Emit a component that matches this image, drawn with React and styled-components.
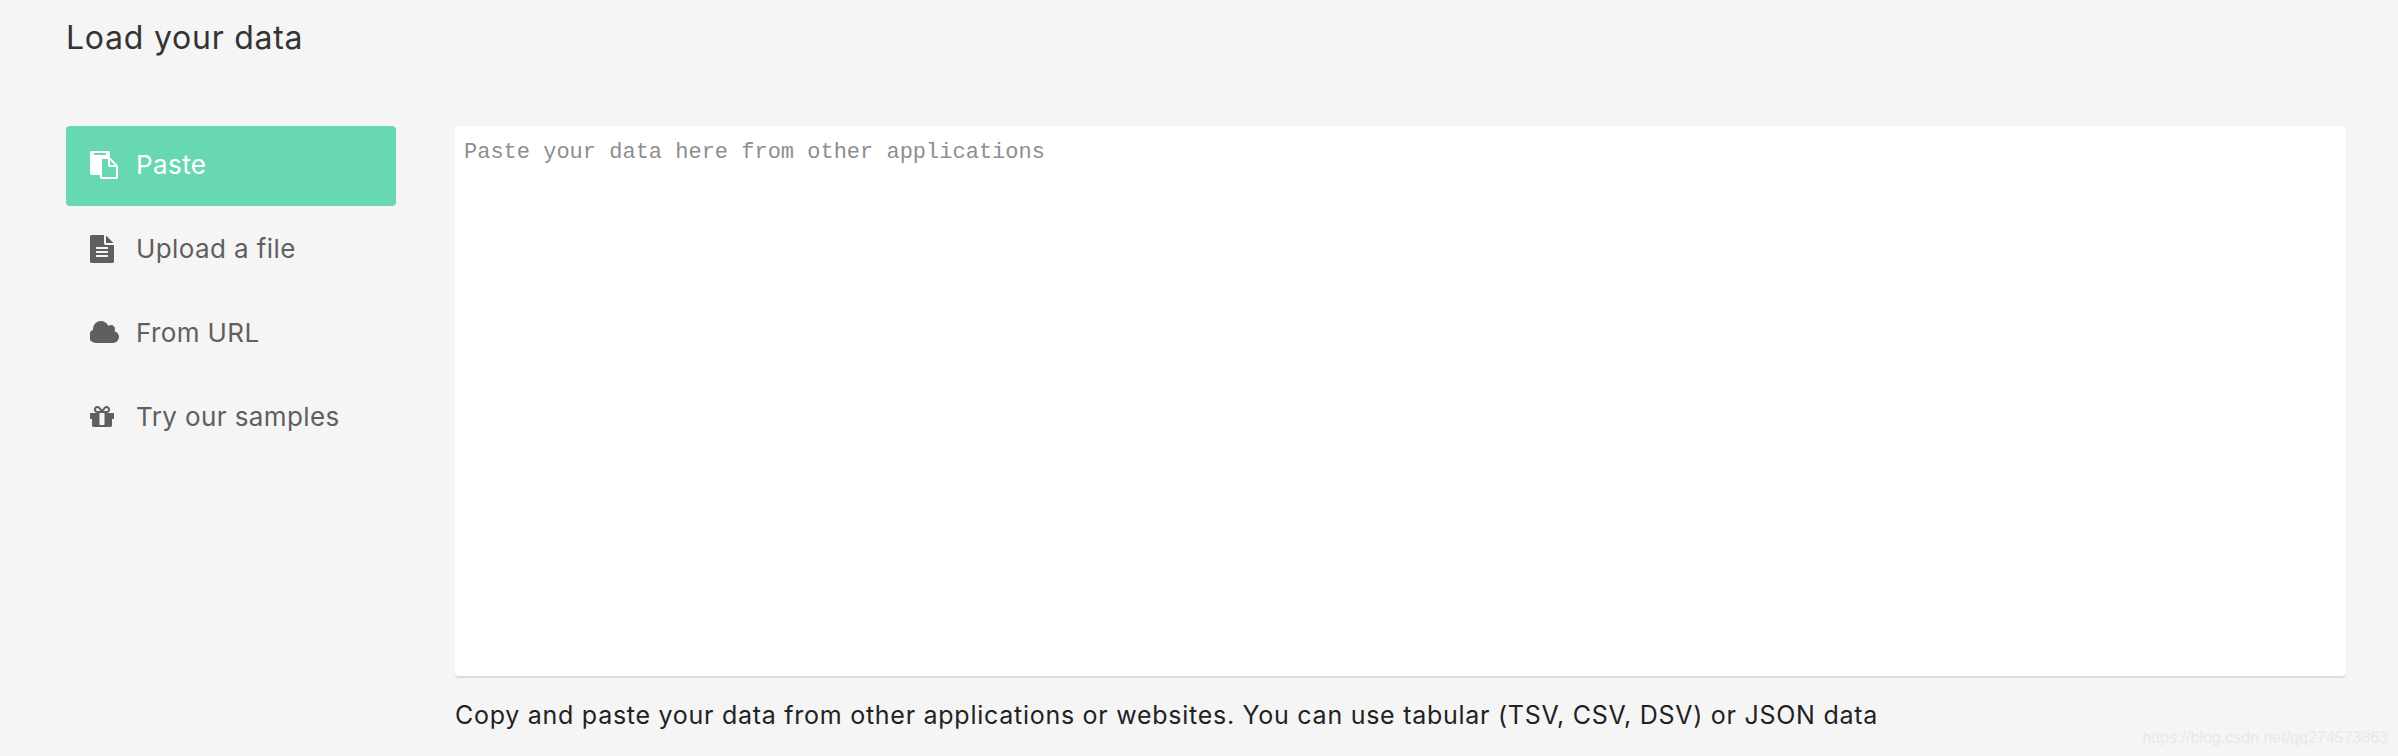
import React from "react";
import styled, { createGlobalStyle } from "styled-components";

const GlobalStyle = createGlobalStyle`
  * {
    box-sizing: border-box;
  }
  html, body {
    margin: 0;
    background: #f5f5f5;
  }
  body {
    font-family: "Inter", "Liberation Sans", sans-serif;
  }
`;

const Page = styled.div`
  position: relative;
  width: 100%;
  height: 756px;
  overflow: hidden;
  padding: 0 52px 0 66px;
`;

const Title = styled.h2`
  margin: 0;
  height: 126px;
  padding-top: 18px;
  font-size: 32px;
  line-height: 40px;
  font-weight: 400;
  letter-spacing: 0.75px;
  color: #333;
`;

const Columns = styled.div`
  display: grid;
  grid-template-columns: 330px 1fr;
  column-gap: 59px;
`;

const Menu = styled.ul`
  list-style: none;
  margin: 0;
  padding: 0;
  display: flex;
  flex-direction: column;
  gap: 4px;
`;

const MenuItem = styled.li`
  display: flex;
  align-items: center;
  height: 80px;
  padding: 0 0 3px 24px;
  border-radius: 4px;
  font-size: 26px;
  letter-spacing: 0.4px;
  color: ${(p) => (p.$active ? "#fff" : "#5f5f5f")};
  background: ${(p) => (p.$active ? "#68d7b3" : "transparent")};
`;

const IconSlot = styled.span`
  display: flex;
  width: 46px;
  flex: none;
`;

const Icon = styled.svg`
  display: block;
  height: 28px;
  fill: currentColor;
`;

const Main = styled.div`
  display: flex;
  flex-direction: column;
`;

const DataInput = styled.textarea`
  display: block;
  width: 100%;
  height: 550px;
  padding: 11px 9px;
  border: 0;
  outline: none;
  resize: none;
  background: #fff;
  border-radius: 4px;
  box-shadow: 0 2px 1px #dcdcdc;
  font-family: "Liberation Mono", monospace;
  font-size: 22px;
  line-height: 32px;
  color: #333;

  &::placeholder {
    color: #8e8e8e;
    opacity: 1;
  }
`;

const Caption = styled.p`
  margin: 22px 0 0;
  font-size: 25px;
  line-height: 34px;
  letter-spacing: 0.73px;
  color: #222;
`;

const Watermark = styled.span`
  position: absolute;
  right: 10px;
  bottom: 9px;
  font-family: "Liberation Sans", sans-serif;
  font-size: 16px;
  color: #e8e8e8;
`;

const icons = {
  paste: {
    box: "0 0 1792 1792",
    w: 28,
    d: "M768 1664h896v-640h-416q-40 0-68-28t-28-68v-416h-384v1152zm256-1440v-64q0-13-9.500-22.500t-22.500-9.500h-704q-13 0-22.500 9.500t-9.500 22.500v64q0 13 9.500 22.500t22.500 9.500h704q13 0 22.500-9.500t9.500-22.500zm256 672h299l-299-299v299zm512 128v672q0 40-28 68t-68 28h-960q-40 0-68-28t-28-68v-160h-544q-40 0-68-28t-28-68v-1344q0-40 28-68t68-28h1088q40 0 68 28t28 68v328q21 13 36 28l408 408q28 28 48 76t20 88z",
  },
  file: {
    box: "128 0 1536 1792",
    w: 24,
    d: "M1596 476q14 14 28 36h-472v-472q22 14 36 28zm-476 164h544v1056q0 40-28 68t-68 28h-1344q-40 0-68-28t-28-68v-1600q0-40 28-68t68-28h800v544q0 40 28 68t68 28zm160 736v-64q0-14-9-23t-23-9h-704q-14 0-23 9t-9 23v64q0 14 9 23t23 9h704q14 0 23-9t9-23zm0-256v-64q0-14-9-23t-23-9h-704q-14 0-23 9t-9 23v64q0 14 9 23t23 9h704q14 0 23-9t9-23zm0-256v-64q0-14-9-23t-23-9h-704q-14 0-23 9t-9 23v64q0 14 9 23t23 9h704q14 0 23-9t9-23z",
  },
  cloud: {
    box: "0 0 1920 1792",
    w: 30,
    d: "M1856 1152q0 159-112.500 271.500t-271.500 112.500h-1088q-185 0-316.500-131.500t-131.500-316.500q0-132 71-241.500t187-163.500q-2-28-2-43 0-212 150-362t362-150q158 0 286.500 88t187.500 230q70-62 166-62 106 0 181 75t75 181q0 75-41 138 129 30 213 134.500t84 237.500z",
  },
  gift: {
    box: "128 0 1536 1792",
    w: 24,
    d: "M1056 1356v-716h-320v716q0 25 18 38.500t46 13.500h192q28 0 46-13.500t18-38.500zm-456-844h195l-126-161q-26-31-69-31-40 0-68 28t-28 68 28 68 68 28zm688-96q0-40-28-68t-68-28q-43 0-69 31l-125 161h194q40 0 68-28t28-68zm376 256v320q0 14-9 23t-23 9h-96v416q0 40-28 68t-68 28h-1088q-40 0-68-28t-28-68v-416h-96q-14 0-23-9t-9-23v-320q0-14 9-23t23-9h440q-93 0-158.500-65.500t-65.500-158.500 65.500-158.500 158.500-65.500q107 0 168 77l128 165 128-165q61-77 168-77 93 0 158.500 65.500t65.500 158.500-65.500 158.500-158.500 65.500h440q14 0 23 9t9 23z",
  },
};

const items = [
  { label: "Paste", icon: "paste", active: true },
  { label: "Upload a file", icon: "file" },
  { label: "From URL", icon: "cloud" },
  { label: "Try our samples", icon: "gift" },
];

export default function App() {
  return (
    <Page>
      <GlobalStyle />
      <Title>Load your data</Title>
      <Columns>
        <Menu>
          {items.map((item) => (
            <MenuItem key={item.label} $active={item.active}>
              <IconSlot>
                <Icon viewBox={icons[item.icon].box} width={icons[item.icon].w}>
                  <path d={icons[item.icon].d} />
                </Icon>
              </IconSlot>
              {item.label}
            </MenuItem>
          ))}
        </Menu>
        <Main>
          <DataInput placeholder="Paste your data here from other applications" />
          <Caption>
            Copy and paste your data from other applications or websites. You can use tabular (TSV, CSV, DSV) or JSON data
          </Caption>
        </Main>
      </Columns>
      <Watermark>https://blog.csdn.net/qq274573863</Watermark>
    </Page>
  );
}
